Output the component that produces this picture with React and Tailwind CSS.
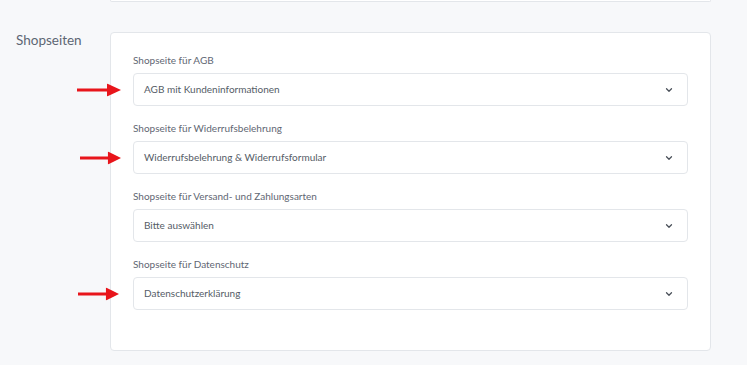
import { ChevronDown } from 'lucide-react';

const fields = [
  { label: 'Shopseite für AGB', value: 'AGB mit Kundeninformationen', arrow: 'left-[-56px] w-[44px]' },
  { label: 'Shopseite für Widerrufsbelehrung', value: 'Widerrufsbelehrung & Widerrufsformular', arrow: 'left-[-53px] w-[41px]' },
  { label: 'Shopseite für Versand- und Zahlungsarten', value: 'Bitte auswählen', arrow: null },
  { label: 'Shopseite für Datenschutz', value: 'Datenschutzerklärung', arrow: 'left-[-55px] w-[41px]' },
];

function RedArrow({ className }) {
  return (
    <svg className={`absolute top-1/2 -translate-y-1/2 h-[13px] ${className}`} viewBox="0 0 44 13" preserveAspectRatio="none">
      <rect x="0" y="5" width="32" height="3" fill="#e8151b" />
      <polygon points="30,0 44,6.5 30,13" fill="#e8151b" />
    </svg>
  );
}

export default function App() {
  return (
    <div className="w-[747px] h-[365px] bg-[#f7f8fa] overflow-hidden" style={{ fontFamily: '"Source Sans Pro", Lato, "Liberation Sans", sans-serif' }}>
      {/* previous card, cut off at top */}
      <div className="flex">
        <div className="w-[110px]" />
        <div className="w-[601px] h-[2px] bg-white border border-t-0 border-[#e3e6ea] rounded-b" />
      </div>

      <div className="flex mt-[30px]">
        <div className="w-[110px] pl-4 -mt-[2px] text-[13.5px] text-[#5d6673]">Shopseiten</div>
        <div className="w-[601px] h-[319px] bg-white border border-[#e3e6ea] rounded pl-[22px] pr-[22px] pt-[20px]">
          <div className="flex flex-col gap-[15px]">
            {fields.map((f) => (
              <div key={f.label}>
                <div className="text-[10px] leading-[14px] text-[#5f6773] mb-[6px]">{f.label}</div>
                <div className="relative">
                  {f.arrow && <RedArrow className={f.arrow} />}
                  <div className="h-[33px] border border-[#e3e6ea] rounded flex items-center justify-between pl-[10px] pr-[13px] text-[10px] text-[#555c66]">
                    <span>{f.value}</span>
                    <ChevronDown className="w-[10px] h-[10px] text-[#4a5059]" strokeWidth={3} />
                  </div>
                </div>
              </div>
            ))}
          </div>
        </div>
      </div>
    </div>
  );
}
